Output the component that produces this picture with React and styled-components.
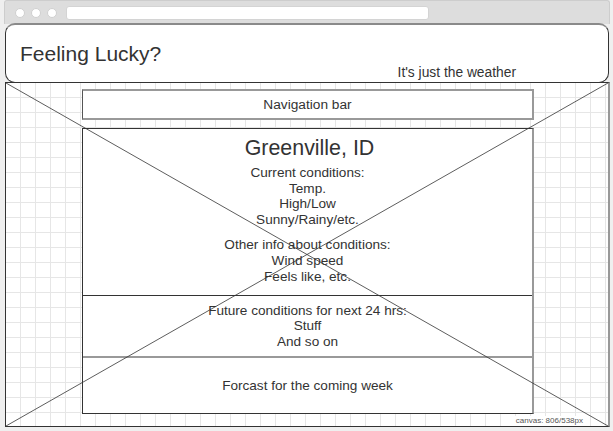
import React from "react";
import styled, { createGlobalStyle } from "styled-components";

const Global = createGlobalStyle`
  html, body { margin: 0; padding: 0; background: #efefef; }
  body { font-family: "Liberation Sans", Arial, sans-serif; color: #333; }
  * { box-sizing: border-box; }
`;

const Window = styled.div`
  width: 606px;
  margin-left: 4px;
  display: flex;
  flex-direction: column;
`;

const Chrome = styled.div`
  height: 24px;
  background: #dddddd;
  border: 1px solid #cdcdcd;
  border-bottom: none;
  border-radius: 3px 3px 0 0;
  display: flex;
  align-items: center;
  padding: 0 0 0 10px;
  gap: 6px;
`;

const Dot = styled.span`
  width: 10px;
  height: 10px;
  border-radius: 50%;
  background: #fff;
  border: 1px solid #d0d0d0;
`;

const Url = styled.div`
  margin-left: 3px;
  width: 363px;
  height: 14px;
  background: #fff;
  border: 1px solid #d4d4d4;
  border-radius: 3px;
`;

const Header = styled.header`
  margin-top: -1px;
  margin-left: 1px;
  width: 604px;
  height: 60px;
  background: #fff;
  border: 1px solid #333;
  border-top: 2px solid #8a8a8a;
  border-radius: 10px;
  display: flex;
  flex-direction: column;
  padding: 17px 0 0 14px;
`;

const Title = styled.h1`
  margin: 0;
  font-size: 21px;
  font-weight: normal;
  line-height: 24px;
  color: #333;
`;

const Tagline = styled.div`
  align-self: flex-end;
  margin-right: 92px;
  margin-top: -1px;
  font-size: 13.8px;
  line-height: 15px;
  color: #333;
`;

const Canvas = styled.main`
  position: relative;
  margin-left: 1px;
  margin-top: -1px;
  width: 605px;
  height: 345px;
  background-color: #fff;
  background-image:
    linear-gradient(to right, #e6e6e6 1px, transparent 1px),
    linear-gradient(to bottom, #e6e6e6 1px, transparent 1px);
  background-size: 15px 15px;
  background-position: -1px -1px;
  border-left: 1px solid #333;
  border-right: 2px solid #999;
  border-bottom: 1px solid #333;
  border-top: 1px solid #333;
  display: flex;
  flex-direction: column;
  align-items: center;
  padding-top: 6px;
  padding-left: 2px;
  gap: 8px;
`;

const Cross = styled.svg`
  position: absolute;
  inset: 0;
  width: 100%;
  height: 100%;
  pointer-events: none;
  z-index: 2;
`;

const Nav = styled.nav`
  width: 452px;
  height: 31px;
  background: #fff;
  border: 2px solid #999;
  border-left: 1px solid #555;
  display: flex;
  align-items: center;
  justify-content: center;
  font-size: 13.7px;
`;

const Main = styled.section`
  width: 452px;
  background: #fff;
  border: 1px solid #333;
  border-right: 2px solid #999;
  display: flex;
  flex-direction: column;
`;

const Section = styled.div`
  height: ${(p) => p.$h}px;
  display: flex;
  flex-direction: column;
  align-items: center;
  justify-content: ${(p) => (p.$top ? "flex-start" : "center")};
  padding-top: ${(p) => (p.$top ? "7px" : "0")};
  border-top: ${(p) => p.$divider || "none"};
  text-align: center;
`;

const City = styled.h2`
  margin: 0 0 5px;
  padding-left: 4px;
  font-size: 21.4px;
  font-weight: normal;
  line-height: 24px;
`;

const Lines = styled.div`
  font-size: 13.6px;
  line-height: 15.6px;
  margin-bottom: ${(p) => p.$gap || 0}px;
`;

const CanvasLabel = styled.span`
  position: absolute;
  right: 24px;
  bottom: 0px;
  font-size: 8px;
  line-height: 10px;
  color: #555;
  background: #fff;
  padding: 0 1px;
  z-index: 1;
`;

export default function App() {
  return (
    <>
      <Global />
      <Window>
        <Chrome>
          <Dot />
          <Dot />
          <Dot />
          <Url />
        </Chrome>
        <Header>
          <Title>Feeling Lucky?</Title>
          <Tagline>It's just the weather</Tagline>
        </Header>
        <Canvas>
          <Cross>
            <line x1="0" y1="0" x2="100%" y2="100%" stroke="#333" strokeWidth="0.8" />
            <line x1="100%" y1="0" x2="0" y2="100%" stroke="#333" strokeWidth="0.8" />
          </Cross>
          <Nav>Navigation bar</Nav>
          <Main>
            <Section $h={166} $top>
              <City>Greenville, ID</City>
              <Lines $gap={10}>
                Current conditions:
                <br />
                Temp.
                <br />
                High/Low
                <br />
                Sunny/Rainy/etc.
              </Lines>
              <Lines>
                Other info about conditions:
                <br />
                Wind speed
                <br />
                Feels like, etc.
              </Lines>
            </Section>
            <Section $h={61} $divider="1px solid #333">
              <Lines>
                Future conditions for next 24 hrs:
                <br />
                Stuff
                <br />
                And so on
              </Lines>
            </Section>
            <Section $h={57} $divider="2px solid #999">
              <Lines>Forcast for the coming week</Lines>
            </Section>
          </Main>
          <CanvasLabel>canvas: 806/538px</CanvasLabel>
        </Canvas>
      </Window>
    </>
  );
}
